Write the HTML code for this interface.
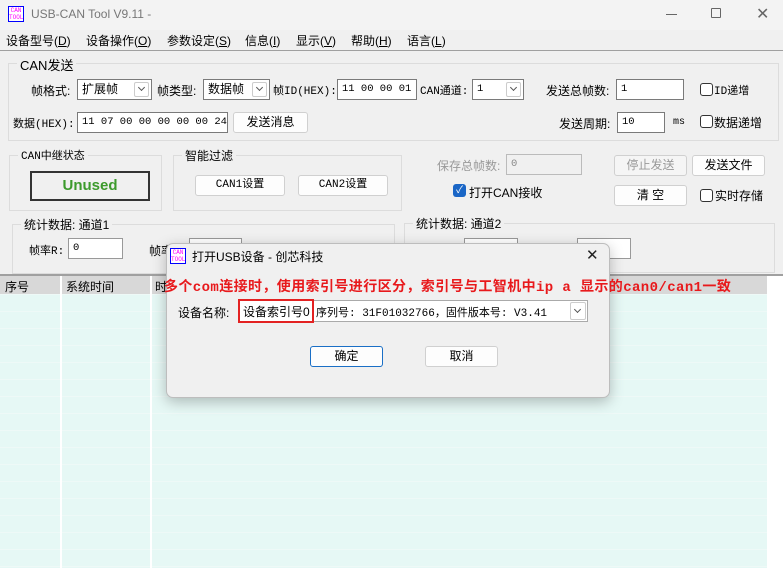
<!DOCTYPE html>
<html><head><meta charset="utf-8"><style>
*{box-sizing:border-box;margin:0;padding:0}
body{width:783px;height:568px;overflow:hidden;background:#f0f0f0;font-family:"Liberation Sans","Noto Sans CJK SC",sans-serif;font-size:12px;color:#000;position:relative}
.a{position:absolute;white-space:nowrap}
.grp{position:absolute;border:1px solid #dcdcdc}
.gl{position:absolute;background:#f0f0f0;padding:0 3px;top:-9px;left:8px;font-size:12px}
.in{position:absolute;background:#fff;border:1px solid #7a7a7a;height:21px;padding:2px 4px;font-family:"Liberation Mono","Noto Sans CJK SC",monospace;font-size:10.5px;line-height:15px;white-space:nowrap;overflow:hidden}
.ss{font-family:"Liberation Sans","Noto Sans CJK SC",sans-serif;font-size:12px}
.btn{position:absolute;background:#fdfdfd;border:1px solid #d0d0d0;border-radius:3px;height:21px;text-align:center;line-height:19px;font-size:12px}
.dd{position:absolute;right:2px;top:2px;width:15px;height:15px;border:1px solid #ccc;border-radius:2px;background:#fff}
.dd:after{content:"";position:absolute;left:4px;top:2px;width:4px;height:4px;border-right:1px solid #555;border-bottom:1px solid #555;transform:rotate(45deg)}
.cb{position:absolute;width:13px;height:13px;border:1px solid #333;border-radius:3px;background:#fff}
.mono{font-family:"Liberation Mono","Noto Sans CJK SC",monospace}
</style></head><body>
<div class="a" style="left:0;top:0;width:783px;height:30px;background:#f3f3f3"></div>
<div class="a" style="left:8px;top:6px;width:16px;height:16px;border:1px solid #00f;background:#fff;font-size:6px;line-height:7px;color:#f0f;text-align:center;font-family:'Liberation Mono',monospace">CAN<br>TOOL</div>
<div class="a" style="left:31px;top:7px;color:#777;font-size:12px">USB-CAN Tool V9.11 -</div>
<div class="a" style="left:666px;top:14px;width:11px;height:1px;background:#666"></div>
<div class="a" style="left:711px;top:8px;width:10px;height:10px;border:1px solid #666;border-radius:1px"></div>
<div class="a" style="left:756px;top:4px;font-size:16px;color:#666">✕</div>
<div class="a" style="left:0;top:30px;width:783px;height:21px;background:#f0f0f0;border-bottom:1px solid #a0a0a0"></div>
<div class="a" style="left:6px;top:32px">设备型号(<u>D</u>)</div>
<div class="a" style="left:86px;top:32px">设备操作(<u>O</u>)</div>
<div class="a" style="left:167px;top:32px">参数设定(<u>S</u>)</div>
<div class="a" style="left:245px;top:32px">信息(<u>I</u>)</div>
<div class="a" style="left:296px;top:32px">显示(<u>V</u>)</div>
<div class="a" style="left:351px;top:32px">帮助(<u>H</u>)</div>
<div class="a" style="left:407px;top:32px">语言(<u>L</u>)</div>

<div class="grp" style="left:8px;top:63px;width:771px;height:78px"><span class="gl" style="font-size:13px">CAN发送</span></div>
<div class="a" style="left:31px;top:82px">帧格式:</div>
<div class="in ss" style="left:77px;top:79px;width:75px">扩展帧<span class="dd"></span></div>
<div class="a" style="left:157px;top:82px">帧类型:</div>
<div class="in ss" style="left:203px;top:79px;width:67px">数据帧<span class="dd"></span></div>
<div class="a mono" style="left:273px;top:82px;font-size:11px">帧ID(HEX):</div>
<div class="in" style="left:337px;top:79px;width:80px">11 00 00 01</div>
<div class="a mono" style="left:420px;top:82px;font-size:11px">CAN通道:</div>
<div class="in" style="left:472px;top:79px;width:52px">1<span class="dd"></span></div>
<div class="a" style="left:546px;top:82px">发送总帧数:</div>
<div class="in" style="left:616px;top:79px;width:68px">1</div>
<div class="cb" style="left:700px;top:83px"></div><div class="a mono" style="left:714px;top:82px;font-size:11px">ID递增</div>
<div class="a mono" style="left:13px;top:115px;font-size:11px">数据(HEX):</div>
<div class="in" style="left:77px;top:112px;width:151px">11 07 00 00 00 00 00 24</div>
<div class="btn" style="left:233px;top:112px;width:75px">发送消息</div>
<div class="a" style="left:559px;top:115px">发送周期:</div>
<div class="in" style="left:617px;top:112px;width:48px">10</div>
<div class="a mono" style="left:673px;top:117px;font-size:10px">ms</div>
<div class="cb" style="left:700px;top:115px"></div><div class="a" style="left:714px;top:114px">数据递增</div>

<div class="grp" style="left:9px;top:155px;width:153px;height:56px"><span class="gl mono" style="font-size:11px">CAN中继状态</span></div>
<div class="a" style="left:30px;top:171px;width:120px;height:30px;border:2px solid #333;background:#f0f0f0;color:#3c9a2c;font-weight:bold;font-size:15px;text-align:center;line-height:26px">Unused</div>
<div class="grp" style="left:173px;top:155px;width:229px;height:56px"><span class="gl" style="font-size:12px">智能过滤</span></div>
<div class="btn mono" style="left:195px;top:175px;width:90px;font-size:11px">CAN1设置</div>
<div class="btn mono" style="left:298px;top:175px;width:90px;font-size:11px">CAN2设置</div>
<div class="a" style="left:437px;top:157px;color:#999">保存总帧数:</div>
<div class="in" style="left:506px;top:154px;width:76px;background:#f0f0f0;border-color:#bbb;color:#888">0</div>
<div class="btn" style="left:614px;top:155px;width:73px;color:#999;background:#f5f5f5">停止发送</div>
<div class="btn" style="left:692px;top:155px;width:73px">发送文件</div>
<div class="a" style="left:453px;top:184px;width:13px;height:13px;border-radius:3px;background:#1a66c6;color:#fff;font-size:10px;line-height:13px;text-align:center">✓</div>
<div class="a" style="left:469px;top:184px">打开CAN接收</div>
<div class="btn" style="left:614px;top:185px;width:73px">清 空</div>
<div class="cb" style="left:700px;top:189px"></div><div class="a" style="left:715px;top:187px">实时存储</div>

<div class="grp" style="left:12px;top:224px;width:383px;height:50px"><span class="gl" style="font-size:12px">统计数据: 通道1</span></div>
<div class="a mono" style="left:29px;top:242px;font-size:11px">帧率R:</div>
<div class="in" style="left:68px;top:238px;width:55px;border-color:#999">0</div>
<div class="a" style="left:149px;top:242px">帧率</div>
<div class="in" style="left:189px;top:238px;width:53px;border-color:#999"></div>
<div class="grp" style="left:404px;top:223px;width:371px;height:50px"><span class="gl" style="font-size:12px">统计数据: 通道2</span></div>
<div class="in" style="left:464px;top:238px;width:54px;border-color:#999"></div>
<div class="in" style="left:577px;top:238px;width:54px;border-color:#999"></div>

<div class="a" style="left:0;top:274px;width:783px;height:294px;background:#fff;border-top:2px solid #a0a0a0"></div>
<div class="a" style="left:0;top:276px;width:767px;height:292px;background:#e6f8f5;background-image:linear-gradient(#eef9f7 1px,transparent 1px);background-size:100% 17px;background-position:0 1px"></div>
<div class="a" style="left:0;top:276px;width:767px;height:18px;background:#d8d8d8"></div>
<div class="a" style="left:60px;top:276px;width:2px;height:292px;background:#fff"></div>
<div class="a" style="left:150px;top:276px;width:2px;height:292px;background:#fff"></div>
<div class="a" style="left:5px;top:278px">序号</div>
<div class="a" style="left:66px;top:278px">系统时间</div>
<div class="a" style="left:155px;top:278px">时</div>

<div class="a" style="left:166px;top:243px;width:444px;height:155px;background:#f0f0f0;border:1px solid #bdbdbd;border-radius:7px;box-shadow:0 4px 14px rgba(0,0,0,.25)"></div>
<div class="a" style="left:170px;top:248px;width:16px;height:16px;border:1px solid #00f;background:#fff;font-size:6px;line-height:7px;color:#f0f;text-align:center;font-family:'Liberation Mono',monospace">CAN<br>TOOL</div>
<div class="a" style="left:192px;top:248px">打开USB设备 - 创芯科技</div>
<div class="a" style="left:586px;top:246px;font-size:15px;color:#222">✕</div>
<div class="a" style="left:164px;top:276px;color:#e8191c;font-weight:bold;font-size:14px;font-family:'Liberation Mono','Noto Sans CJK SC',monospace;letter-spacing:0.4px">多个com连接时，使用索引号进行区分，索引号与工智机中ip a 显示的can0/can1一致</div>
<div class="a" style="left:178px;top:304px">设备名称:</div>
<div class="a" style="left:239px;top:300px;width:349px;height:22px;background:#fff;border:1px solid #aaa"></div>
<div class="a" style="left:238px;top:299px;width:76px;height:24px;border:2px solid #e32222;padding:2px 3px">设备索引号0</div>
<div class="a mono" style="left:316px;top:304px;font-size:11px">序列号: 31F01032766，固件版本号: V3.41</div>
<div class="a" style="left:570px;top:302px;width:16px;height:18px;border:1px solid #ccc;border-radius:2px;background:#fff"></div>
<div class="a" style="left:575px;top:307px;width:5px;height:5px;border-right:1px solid #555;border-bottom:1px solid #555;transform:rotate(45deg)"></div>
<div class="btn" style="left:310px;top:346px;width:73px;border:1.5px solid #1a6fc6">确定</div>
<div class="btn" style="left:425px;top:346px;width:73px">取消</div>
</body></html>
